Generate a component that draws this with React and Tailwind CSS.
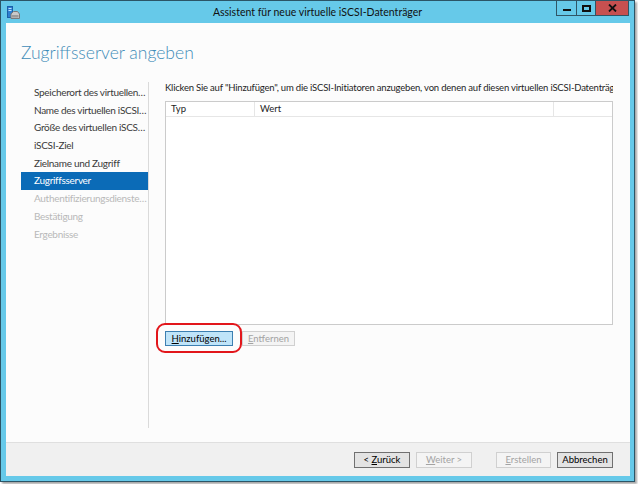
export default function App() {
  const f = "font-['Lato',sans-serif]";
  const navItems = [
    { t: "Speicherort des virtuellen iSCSI-Datenträgers", s: "n" },
    { t: "Name des virtuellen iSCSI-Datenträgers", s: "n" },
    { t: "Größe des virtuellen iSCSI-Datenträgers", s: "n" },
    { t: "iSCSI-Ziel", s: "n" },
    { t: "Zielname und Zugriff", s: "n" },
    { t: "Zugriffsserver", s: "a" },
    { t: "Authentifizierungsdienste für iSCSI", s: "d" },
    { t: "Bestätigung", s: "d" },
    { t: "Ergebnisse", s: "d" },
  ];
  return (
    <div className={`w-[638px] h-[484px] bg-white ${f}`}>
      <div className="w-[635px] h-[482px] border border-[#2b5567] bg-[#66c9e9] flex flex-col shadow-[2px_2px_2px_rgba(0,0,0,0.35)]">
        {/* Title bar */}
        <div className="h-[22px] grid grid-cols-[1fr_auto_1fr] items-center shrink-0">
          <div className="pl-[6px] flex items-center">
            <svg width="13" height="13" viewBox="0 0 13 13">
              <rect x="0.5" y="0.5" width="5" height="11" fill="#2d7fd0" stroke="#1b5fa8" strokeWidth="1" />
              <rect x="1.5" y="2" width="3" height="1" fill="#bfe0ff" />
              <rect x="1.5" y="4" width="3" height="1" fill="#bfe0ff" />
              <path d="M4 8 L6.5 5.5 H10.5 L12.5 8 V12.5 H4 Z" fill="#c9c9c9" stroke="#7a7a7a" strokeWidth="1" />
              <rect x="5" y="9" width="6.5" height="2.5" fill="#9a9a9a" />
            </svg>
          </div>
          <div className="text-[10.5px] text-[#111] leading-none whitespace-nowrap">
            Assistent für neue virtuelle iSCSI-Datenträger
          </div>
          <div className="flex justify-end self-start -mt-px mr-[5px]">
            <div className="w-[21px] h-[16px] border border-[#2f5566] flex items-center justify-center">
              <div className="w-[8px] h-[2px] bg-[#111] mt-[4px]" />
            </div>
            <div className="w-[19px] h-[16px] border border-l-0 border-[#2f5566] flex items-center justify-center">
              <div className="w-[9px] h-[7px] border-2 border-[#111]" />
            </div>
            <div className="w-[33px] h-[16px] border border-l-0 border-[#2f5566] bg-[#c75050] flex items-center justify-center">
              <svg width="9" height="8" viewBox="0 0 9 8">
                <path d="M1 0.5 L8 7.5 M8 0.5 L1 7.5" stroke="#111" strokeWidth="1.8" />
              </svg>
            </div>
          </div>
        </div>

        {/* Client */}
        <div className="flex-1 ml-[5px] mr-[4px] mb-[5px] bg-[#fcfcfc] flex flex-col">
          {/* Header */}
          <div className="h-[57px] shrink-0 pl-[15px] pt-[18px]">
            <div className="text-[17.5px] leading-[24px] font-light text-[#3f8cb8]">
              Zugriffsserver angeben
            </div>
          </div>

          {/* Body */}
          <div className="flex-1 flex">
            <div className="w-[143px] shrink-0 mt-[2px] mb-[14px] border-r border-[#dadada] pl-[15px] pt-[2px]">
              {navItems.map((it) => (
                <div
                  key={it.t}
                  className={`w-[127px] h-[17.7px] leading-[17.7px] pl-[13px] pr-[1px] text-[10px] tracking-[-0.3px] whitespace-nowrap overflow-hidden text-ellipsis ${
                    it.s === "a"
                      ? "bg-[#0b6bb7] text-white"
                      : it.s === "d"
                      ? "text-[#b9b9b9]"
                      : "text-[#3a3a3a]"
                  }`}
                >
                  {it.t}
                </div>
              ))}
            </div>

            <div className="flex-1 pl-[16px]">
              <div className="w-[448px] overflow-hidden whitespace-nowrap text-[9.5px] tracking-[-0.2px] leading-[16px] text-[#1e1e1e]">
                Klicken Sie auf "Hinzufügen", um die iSCSI-Initiatoren anzugeben, von denen auf diesen virtuellen iSCSI-Datenträger zugegriffen wird.
              </div>
              <div className="mt-[5px] w-[448px] h-[224px] border border-[#cbcbcb] bg-white">
                <div className="h-[15px] flex border-b border-[#e6e6e6] text-[9.5px] leading-[14px] text-[#1e1e1e]">
                  <div className="w-[89px] border-r border-[#e6e6e6] pl-[5px]">Typ</div>
                  <div className="w-[299px] border-r border-[#e6e6e6] pl-[5px]">Wert</div>
                  <div className="flex-1" />
                </div>
              </div>
              <div className="mt-[6px] flex gap-[9px]">
                <div className="relative">
                  <div className="w-[68px] h-[15px] border border-[#3c7fb1] bg-[#bfe4f9] text-[9.5px] leading-[13px] text-center text-black">
                    <span className="underline">H</span>inzufügen...
                  </div>
                  <div className="absolute -left-[9px] -top-[8px] w-[86px] h-[30px] border-2 border-[#e2161b] rounded-[9px]" />
                </div>
                <div className="w-[53px] h-[15px] border border-[#d0d0d0] bg-[#f4f4f4] text-[9.5px] leading-[13px] text-center text-[#a3a3a3]">
                  <span className="underline">E</span>ntfernen
                </div>
              </div>
            </div>
          </div>

          {/* Footer */}
          <div className="h-[34px] shrink-0 bg-[#f0f0f0] border-t border-[#dfdfdf] flex items-center justify-end pr-[17px] text-[9.5px]">
            <div className="w-[56px] h-[16px] border border-[#707070] bg-[#e3e3e3] leading-[14px] text-center text-black">
              &lt; <span className="underline">Z</span>urück
            </div>
            <div className="ml-[6px] w-[56px] h-[16px] border border-[#d0d0d0] bg-[#f4f4f4] leading-[14px] text-center text-[#a3a3a3]">
              <span className="underline">W</span>eiter &gt;
            </div>
            <div className="ml-[24px] w-[55px] h-[16px] border border-[#d0d0d0] bg-[#f4f4f4] leading-[14px] text-center text-[#a3a3a3]">
              <span className="underline">E</span>rstellen
            </div>
            <div className="ml-[6px] w-[56px] h-[16px] border border-[#707070] bg-[#e3e3e3] leading-[14px] text-center text-black">
              Abbrechen
            </div>
          </div>
        </div>
      </div>
    </div>
  );
}
